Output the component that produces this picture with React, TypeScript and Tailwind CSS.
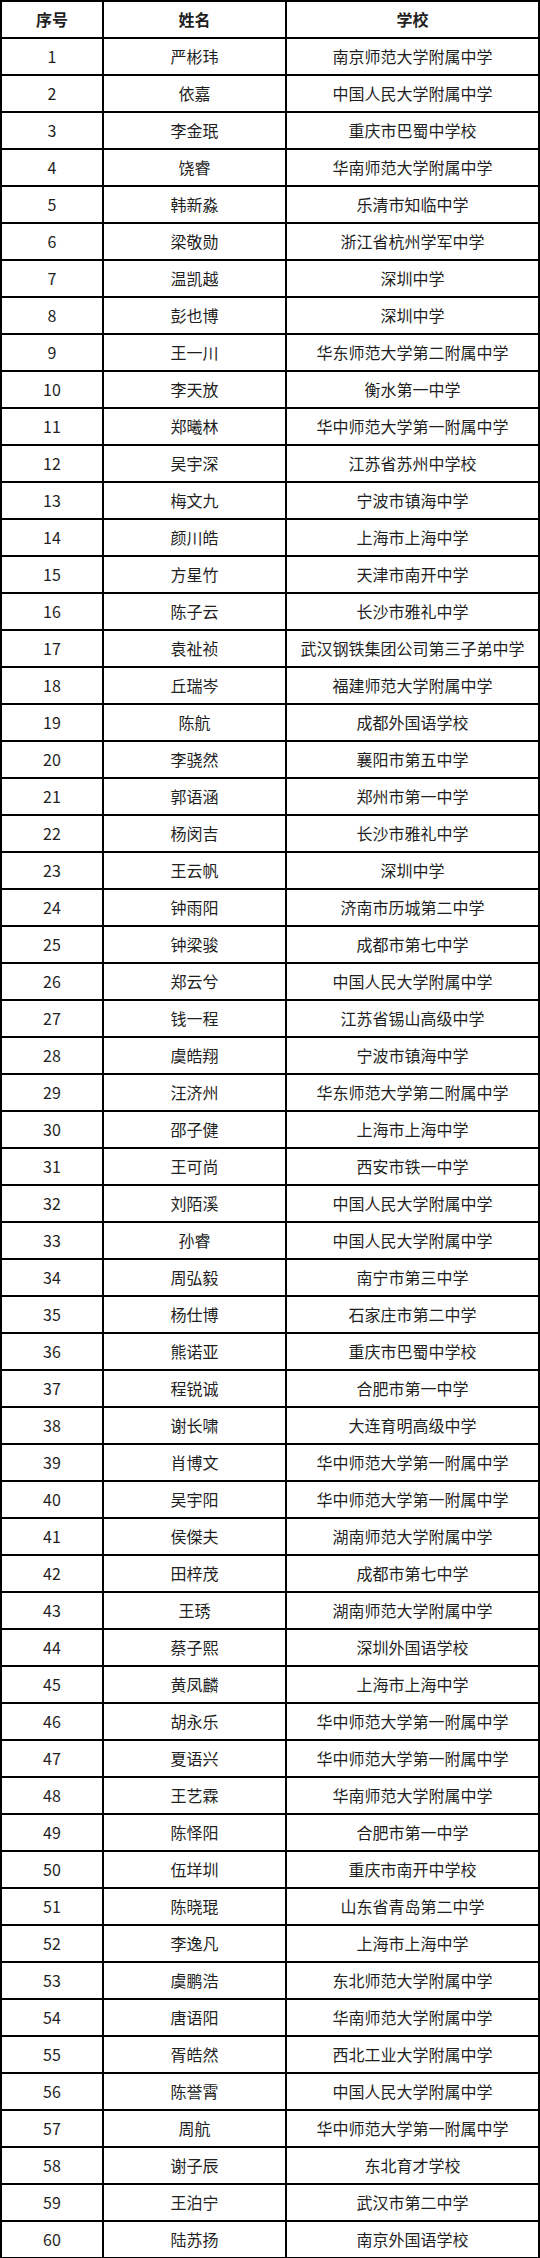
import React from "react";

type Row = [string, string];

const rows: Row[] = [
  ["严彬玮", "南京师范大学附属中学"],
  ["依嘉", "中国人民大学附属中学"],
  ["李金珉", "重庆市巴蜀中学校"],
  ["饶睿", "华南师范大学附属中学"],
  ["韩新淼", "乐清市知临中学"],
  ["梁敬勋", "浙江省杭州学军中学"],
  ["温凯越", "深圳中学"],
  ["彭也博", "深圳中学"],
  ["王一川", "华东师范大学第二附属中学"],
  ["李天放", "衡水第一中学"],
  ["郑曦林", "华中师范大学第一附属中学"],
  ["吴宇深", "江苏省苏州中学校"],
  ["梅文九", "宁波市镇海中学"],
  ["颜川皓", "上海市上海中学"],
  ["方星竹", "天津市南开中学"],
  ["陈子云", "长沙市雅礼中学"],
  ["袁祉祯", "武汉钢铁集团公司第三子弟中学"],
  ["丘瑞岑", "福建师范大学附属中学"],
  ["陈航", "成都外国语学校"],
  ["李骁然", "襄阳市第五中学"],
  ["郭语涵", "郑州市第一中学"],
  ["杨闵吉", "长沙市雅礼中学"],
  ["王云帆", "深圳中学"],
  ["钟雨阳", "济南市历城第二中学"],
  ["钟梁骏", "成都市第七中学"],
  ["郑云兮", "中国人民大学附属中学"],
  ["钱一程", "江苏省锡山高级中学"],
  ["虞皓翔", "宁波市镇海中学"],
  ["汪济州", "华东师范大学第二附属中学"],
  ["邵子健", "上海市上海中学"],
  ["王可尚", "西安市铁一中学"],
  ["刘陌溪", "中国人民大学附属中学"],
  ["孙睿", "中国人民大学附属中学"],
  ["周弘毅", "南宁市第三中学"],
  ["杨仕博", "石家庄市第二中学"],
  ["熊诺亚", "重庆市巴蜀中学校"],
  ["程锐诚", "合肥市第一中学"],
  ["谢长啸", "大连育明高级中学"],
  ["肖博文", "华中师范大学第一附属中学"],
  ["吴宇阳", "华中师范大学第一附属中学"],
  ["侯傑夫", "湖南师范大学附属中学"],
  ["田梓茂", "成都市第七中学"],
  ["王琇", "湖南师范大学附属中学"],
  ["蔡子熙", "深圳外国语学校"],
  ["黄凤麟", "上海市上海中学"],
  ["胡永乐", "华中师范大学第一附属中学"],
  ["夏语兴", "华中师范大学第一附属中学"],
  ["王艺霖", "华南师范大学附属中学"],
  ["陈怿阳", "合肥市第一中学"],
  ["伍垟圳", "重庆市南开中学校"],
  ["陈晓琨", "山东省青岛第二中学"],
  ["李逸凡", "上海市上海中学"],
  ["虞鹏浩", "东北师范大学附属中学"],
  ["唐语阳", "华南师范大学附属中学"],
  ["胥皓然", "西北工业大学附属中学"],
  ["陈誉霄", "中国人民大学附属中学"],
  ["周航", "华中师范大学第一附属中学"],
  ["谢子辰", "东北育才学校"],
  ["王泊宁", "武汉市第二中学"],
  ["陆苏扬", "南京外国语学校"],
];

const font =
  "font-['Microsoft_YaHei','Noto_Sans_CJK_SC','Noto_Sans',sans-serif]";

const RowLine = ({
  cells,
  head,
}: {
  cells: [string, string, string];
  head?: boolean;
}) => (
  <div
    className={`grid grid-cols-[102px_183px_1fr] h-[37px] border-b-2 border-black ${
      head ? "font-bold" : ""
    }`}
  >
    {cells.map((c, i) => (
      <div
        key={i}
        className="flex items-center justify-center border-r-2 border-black pb-[1px]"
      >
        {c}
      </div>
    ))}
  </div>
);

export default function App() {
  return (
    <div className="w-[540px] bg-white">
      <div
        className={`border-l-2 border-t-2 border-black text-[16px] leading-none text-[#1f1f1f] ${font}`}
      >
        <RowLine cells={["序号", "姓名", "学校"]} head />
        {rows.map((r, i) => (
          <RowLine key={i} cells={[String(i + 1), r[0], r[1]]} />
        ))}
      </div>
    </div>
  );
}
